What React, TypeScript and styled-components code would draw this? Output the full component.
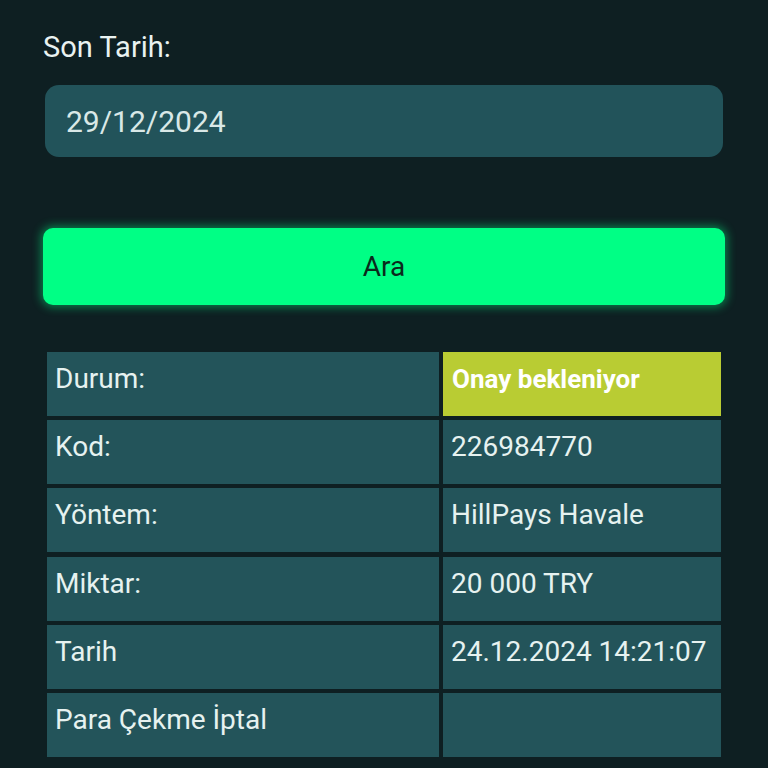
import React from "react";
import styled, { createGlobalStyle } from "styled-components";

const Global = createGlobalStyle`
  html, body { margin: 0; padding: 0; background: #0e1f22; }
  body { font-family: Roboto, "Noto Sans", "Liberation Sans", sans-serif; }
  * { box-sizing: border-box; }
`;

const Page = styled.div`
  width: 768px;
  height: 768px;
  overflow: hidden;
  background: #0e1f22;
  padding: 31px 43px 0 43px;
  display: flex;
  flex-direction: column;
`;

const Label = styled.div`
  color: #e9f2f1;
  font-size: 29px;
  line-height: 33px;
  padding-left: 0;
`;

const DateInput = styled.div`
  margin: 21px 2px 0 2px;
  height: 72px;
  border-radius: 14px;
  background: #22535a;
  color: #d9e8e7;
  font-size: 30px;
  display: flex;
  align-items: center;
  padding-left: 21px;
`;

const SearchButton = styled.button`
  margin-top: 71px;
  height: 77px;
  width: 682px;
  border: none;
  border-radius: 10px;
  background: #00ff85;
  box-shadow: 0 0 10px 2px rgba(0, 255, 133, 0.45);
  color: #0b2a1c;
  font-family: Roboto, "Noto Sans", sans-serif;
  font-size: 28px;
  display: flex;
  align-items: center;
  justify-content: center;
`;

const Table = styled.div`
  margin: 47px 4px 0 4px;
  display: grid;
  grid-template-columns: 392px 278px;
  grid-auto-rows: 64px;
  column-gap: 4px;
  row-gap: 4.2px;
`;

const Cell = styled.div<{ $status?: boolean }>`
  background: ${(p) => (p.$status ? "#b9cc33" : "#23545a")};
  color: ${(p) => (p.$status ? "#ffffff" : "#e6f2f0")};
  font-weight: ${(p) => (p.$status ? 700 : 400)};
  font-size: ${(p) => (p.$status ? "26px" : "28px")};
  line-height: 33px;
  padding: ${(p) => (p.$status ? "11px 9px" : "10px 8px")};
  white-space: nowrap;
`;

const rows: [string, string][] = [
  ["Kod:", "226984770"],
  ["Yöntem:", "HillPays Havale"],
  ["Miktar:", "20 000 TRY"],
  ["Tarih", "24.12.2024 14:21:07"],
  ["Para Çekme İptal", ""],
];

export default function App() {
  return (
    <Page>
      <Global />
      <Label>Son Tarih:</Label>
      <DateInput>29/12/2024</DateInput>
      <SearchButton>Ara</SearchButton>
      <Table>
        <Cell>Durum:</Cell>
        <Cell $status>Onay bekleniyor</Cell>
        {rows.map(([k, v]) => (
          <React.Fragment key={k}>
            <Cell>{k}</Cell>
            <Cell>{v}</Cell>
          </React.Fragment>
        ))}
      </Table>
    </Page>
  );
}
